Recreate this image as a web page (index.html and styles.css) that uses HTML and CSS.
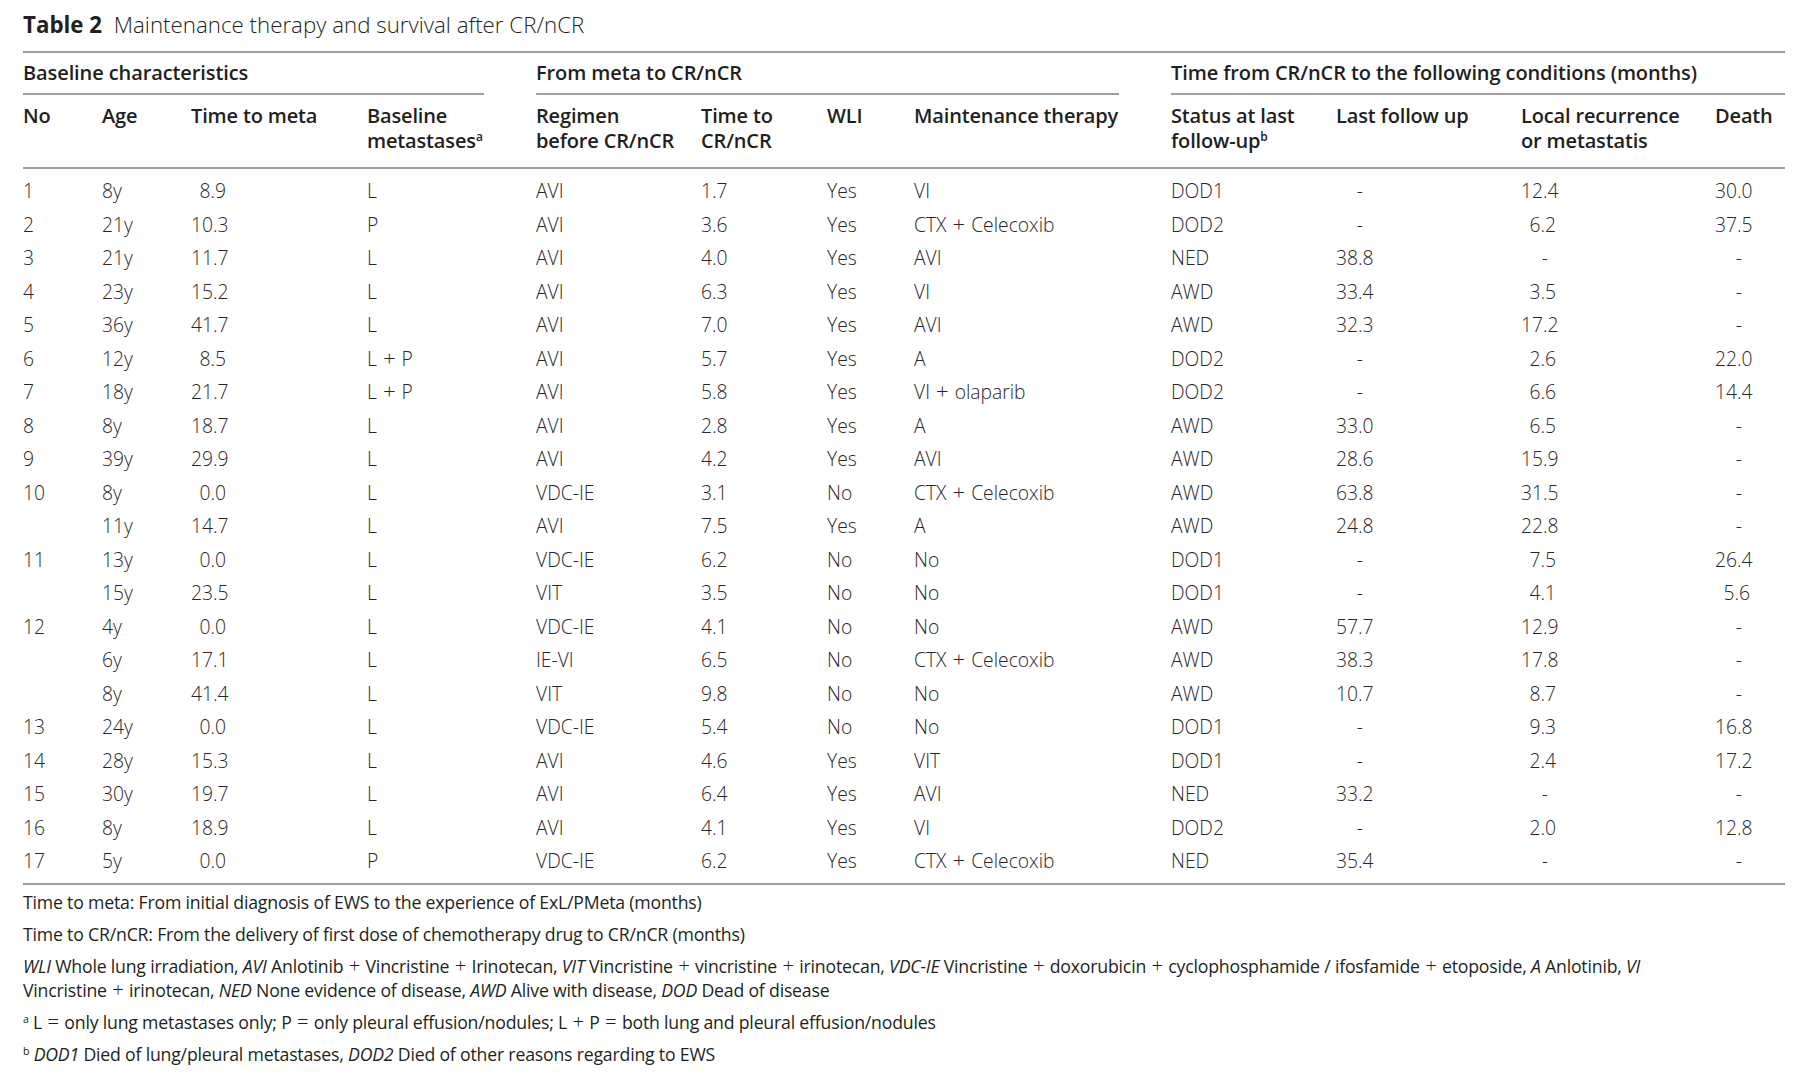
FILE: index.html
```html
<!DOCTYPE html>
<html lang="en">
<head>
<meta charset="utf-8">
<title>Table 2</title>
<link rel="stylesheet" href="styles.css">
</head>
<body>
<div class="page">
  <h1 class="title"><b>Table 2</b> Maintenance therapy and survival after CR/nCR</h1>
  <div class="table">
    <div class="cols groups">
      <div class="group">Baseline characteristics</div>
      <div class="group">From meta to CR/nCR</div>
      <div class="group last">Time from CR/nCR to the following conditions (months)</div>
    </div>
    <div class="cols head">
      <div>No</div>
      <div>Age</div>
      <div>Time to meta</div>
      <div>Baseline<br>metastases<sup>a</sup></div>
      <div>Regimen<br>before CR/nCR</div>
      <div>Time to<br>CR/nCR</div>
      <div>WLI</div>
      <div>Maintenance therapy</div>
      <div>Status at last<br>follow-up<sup>b</sup></div>
      <div>Last follow up</div>
      <div>Local recurrence<br>or metastatis</div>
      <div>Death</div>
    </div>
    <div class="body">
      <div class="cols row"><div>1</div><div>8y</div><div><span class="n">8.9</span></div><div>L</div><div>AVI</div><div>1.7</div><div>Yes</div><div>VI</div><div>DOD1</div><div><span class="d">-</span></div><div><span class="n">12.4</span></div><div><span class="n">30.0</span></div></div>
      <div class="cols row"><div>2</div><div>21y</div><div><span class="n">10.3</span></div><div>P</div><div>AVI</div><div>3.6</div><div>Yes</div><div>CTX <span class="op">+</span> Celecoxib</div><div>DOD2</div><div><span class="d">-</span></div><div><span class="n">6.2</span></div><div><span class="n">37.5</span></div></div>
      <div class="cols row"><div>3</div><div>21y</div><div><span class="n">11.7</span></div><div>L</div><div>AVI</div><div>4.0</div><div>Yes</div><div>AVI</div><div>NED</div><div><span class="n">38.8</span></div><div><span class="d">-</span></div><div><span class="d">-</span></div></div>
      <div class="cols row"><div>4</div><div>23y</div><div><span class="n">15.2</span></div><div>L</div><div>AVI</div><div>6.3</div><div>Yes</div><div>VI</div><div>AWD</div><div><span class="n">33.4</span></div><div><span class="n">3.5</span></div><div><span class="d">-</span></div></div>
      <div class="cols row"><div>5</div><div>36y</div><div><span class="n">41.7</span></div><div>L</div><div>AVI</div><div>7.0</div><div>Yes</div><div>AVI</div><div>AWD</div><div><span class="n">32.3</span></div><div><span class="n">17.2</span></div><div><span class="d">-</span></div></div>
      <div class="cols row"><div>6</div><div>12y</div><div><span class="n">8.5</span></div><div>L <span class="op">+</span> P</div><div>AVI</div><div>5.7</div><div>Yes</div><div>A</div><div>DOD2</div><div><span class="d">-</span></div><div><span class="n">2.6</span></div><div><span class="n">22.0</span></div></div>
      <div class="cols row"><div>7</div><div>18y</div><div><span class="n">21.7</span></div><div>L <span class="op">+</span> P</div><div>AVI</div><div>5.8</div><div>Yes</div><div>VI <span class="op">+</span> olaparib</div><div>DOD2</div><div><span class="d">-</span></div><div><span class="n">6.6</span></div><div><span class="n">14.4</span></div></div>
      <div class="cols row"><div>8</div><div>8y</div><div><span class="n">18.7</span></div><div>L</div><div>AVI</div><div>2.8</div><div>Yes</div><div>A</div><div>AWD</div><div><span class="n">33.0</span></div><div><span class="n">6.5</span></div><div><span class="d">-</span></div></div>
      <div class="cols row"><div>9</div><div>39y</div><div><span class="n">29.9</span></div><div>L</div><div>AVI</div><div>4.2</div><div>Yes</div><div>AVI</div><div>AWD</div><div><span class="n">28.6</span></div><div><span class="n">15.9</span></div><div><span class="d">-</span></div></div>
      <div class="cols row"><div>10</div><div>8y</div><div><span class="n">0.0</span></div><div>L</div><div>VDC-IE</div><div>3.1</div><div>No</div><div>CTX <span class="op">+</span> Celecoxib</div><div>AWD</div><div><span class="n">63.8</span></div><div><span class="n">31.5</span></div><div><span class="d">-</span></div></div>
      <div class="cols row"><div></div><div>11y</div><div><span class="n">14.7</span></div><div>L</div><div>AVI</div><div>7.5</div><div>Yes</div><div>A</div><div>AWD</div><div><span class="n">24.8</span></div><div><span class="n">22.8</span></div><div><span class="d">-</span></div></div>
      <div class="cols row"><div>11</div><div>13y</div><div><span class="n">0.0</span></div><div>L</div><div>VDC-IE</div><div>6.2</div><div>No</div><div>No</div><div>DOD1</div><div><span class="d">-</span></div><div><span class="n">7.5</span></div><div><span class="n">26.4</span></div></div>
      <div class="cols row"><div></div><div>15y</div><div><span class="n">23.5</span></div><div>L</div><div>VIT</div><div>3.5</div><div>No</div><div>No</div><div>DOD1</div><div><span class="d">-</span></div><div><span class="n">4.1</span></div><div><span class="n">5.6</span></div></div>
      <div class="cols row"><div>12</div><div>4y</div><div><span class="n">0.0</span></div><div>L</div><div>VDC-IE</div><div>4.1</div><div>No</div><div>No</div><div>AWD</div><div><span class="n">57.7</span></div><div><span class="n">12.9</span></div><div><span class="d">-</span></div></div>
      <div class="cols row"><div></div><div>6y</div><div><span class="n">17.1</span></div><div>L</div><div>IE-VI</div><div>6.5</div><div>No</div><div>CTX <span class="op">+</span> Celecoxib</div><div>AWD</div><div><span class="n">38.3</span></div><div><span class="n">17.8</span></div><div><span class="d">-</span></div></div>
      <div class="cols row"><div></div><div>8y</div><div><span class="n">41.4</span></div><div>L</div><div>VIT</div><div>9.8</div><div>No</div><div>No</div><div>AWD</div><div><span class="n">10.7</span></div><div><span class="n">8.7</span></div><div><span class="d">-</span></div></div>
      <div class="cols row"><div>13</div><div>24y</div><div><span class="n">0.0</span></div><div>L</div><div>VDC-IE</div><div>5.4</div><div>No</div><div>No</div><div>DOD1</div><div><span class="d">-</span></div><div><span class="n">9.3</span></div><div><span class="n">16.8</span></div></div>
      <div class="cols row"><div>14</div><div>28y</div><div><span class="n">15.3</span></div><div>L</div><div>AVI</div><div>4.6</div><div>Yes</div><div>VIT</div><div>DOD1</div><div><span class="d">-</span></div><div><span class="n">2.4</span></div><div><span class="n">17.2</span></div></div>
      <div class="cols row"><div>15</div><div>30y</div><div><span class="n">19.7</span></div><div>L</div><div>AVI</div><div>6.4</div><div>Yes</div><div>AVI</div><div>NED</div><div><span class="n">33.2</span></div><div><span class="d">-</span></div><div><span class="d">-</span></div></div>
      <div class="cols row"><div>16</div><div>8y</div><div><span class="n">18.9</span></div><div>L</div><div>AVI</div><div>4.1</div><div>Yes</div><div>VI</div><div>DOD2</div><div><span class="d">-</span></div><div><span class="n">2.0</span></div><div><span class="n">12.8</span></div></div>
      <div class="cols row"><div>17</div><div>5y</div><div><span class="n">0.0</span></div><div>P</div><div>VDC-IE</div><div>6.2</div><div>Yes</div><div>CTX <span class="op">+</span> Celecoxib</div><div>NED</div><div><span class="n">35.4</span></div><div><span class="d">-</span></div><div><span class="d">-</span></div></div>
    </div>
  </div>
  <div class="notes">
    <p>Time to meta: From initial diagnosis of EWS to the experience of ExL/PMeta (months)</p>
    <p>Time to CR/nCR: From the delivery of first dose of chemotherapy drug to CR/nCR (months)</p>
    <p><i>WLI</i> Whole lung irradiation, <i>AVI</i> Anlotinib <span class="op">+</span> Vincristine <span class="op">+</span> Irinotecan, <i>VIT</i> Vincristine <span class="op">+</span> vincristine <span class="op">+</span> irinotecan, <i>VDC-IE</i> Vincristine <span class="op">+</span> doxorubicin <span class="op">+</span> cyclophosphamide / ifosfamide <span class="op">+</span> etoposide, <i>A</i> Anlotinib, <i>VI</i><br>Vincristine <span class="op">+</span> irinotecan, <i>NED</i> None evidence of disease, <i>AWD</i> Alive with disease, <i>DOD</i> Dead of disease</p>
    <p><sup>a</sup> L <span class="op">=</span> only lung metastases only; P <span class="op">=</span> only pleural effusion/nodules; L <span class="op">+</span> P <span class="op">=</span> both lung and pleural effusion/nodules</p>
    <p><sup>b</sup> <i>DOD1</i> Died of lung/pleural metastases, <i>DOD2</i> Died of other reasons regarding to EWS</p>
  </div>
</div>
</body>
</html>
```
FILE: styles.css
```css
html, body {
  margin: 0;
  padding: 0;
  background: #ffffff;
}

body {
  color: #231f20;
  font-family: "Open Sans", "Noto Sans", "DejaVu Sans", sans-serif;
}

.page {
  width: 1762px;
  padding: 10px 27px 0 23px;
}

.title {
  margin: 0;
  font-size: 22.3px;
  line-height: 30px;
  font-weight: 300;
  letter-spacing: 0;
}

.title b {
  font-weight: 700;
  margin-right: 6px;
}

.table {
  margin-top: 11px;
  border-top: 2px solid #9e9e9e;
  border-bottom: 2px solid #9e9e9e;
}

.cols {
  display: grid;
  grid-template-columns: 79px 89px 176px 169px 165px 126px 87px 257px 165px 185px 194px 70px;
}

.groups {
  padding-top: 8px;
}

.group {
  grid-column: span 4;
  margin-right: 52px;
  padding-bottom: 8px;
  border-bottom: 2px solid #9e9e9e;
  font-size: 20px;
  line-height: 24px;
  font-weight: 600;
  letter-spacing: -0.1px;
}

.group.last {
  margin-right: 0;
}

.head {
  padding: 8px 0 14px;
  border-bottom: 2px solid #9e9e9e;
  font-size: 20px;
  line-height: 25px;
  font-weight: 600;
  letter-spacing: -0.15px;
}

.head sup,
.notes sup {
  font-size: 0.6em;
  line-height: 0;
  vertical-align: 0.6em;
}

.body {
  padding: 5px 0;
  font-size: 19.3px;
  font-weight: 300;
  color: #2a2627;
}

.row {
  height: 33.5px;
  align-items: center;
  white-space: nowrap;
}

.op {
  display: inline-block;
  margin: 0 1px;
  font-size: 1.15em;
  line-height: 1;
  font-weight: 300;
}

.n,
.d {
  display: inline-block;
  width: 35px;
  text-align: right;
}

.d {
  box-sizing: border-box;
  padding-right: 8px;
}

.notes {
  padding-top: 5px;
  font-size: 17.7px;
  line-height: 24px;
  font-weight: 400;
  letter-spacing: -0.2px;
}

.notes p {
  margin: 0 0 8px;
}
```
